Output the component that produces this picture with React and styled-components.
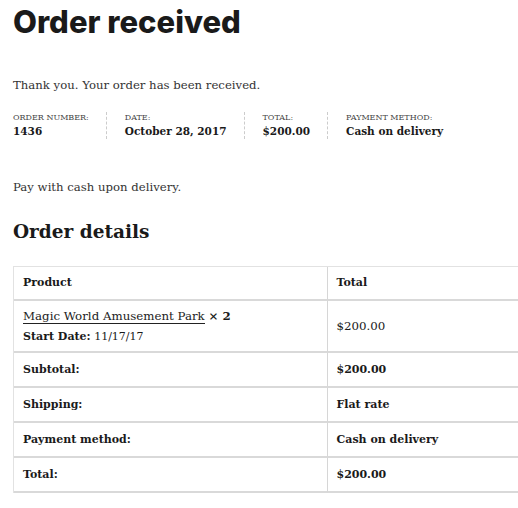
import React from "react";
import styled, { createGlobalStyle } from "styled-components";

const GlobalStyle = createGlobalStyle`
  html, body {
    margin: 0;
    padding: 0;
    background: #fff;
    overflow: hidden;
  }
  body {
    font-family: "DejaVu Serif", "Liberation Serif", serif;
    color: #1a1a1a;
  }
`;

const Page = styled.div`
  padding: 0 0 0 13px;
  width: 640px;
`;

const Title = styled.h1`
  margin: 0;
  padding-top: 2px;
  font-family: Inter, "Liberation Sans", sans-serif;
  font-weight: 800;
  font-size: 31px;
  line-height: 40px;
  color: #1a1a1a;
`;

const Text = styled.p`
  margin: ${(p) => p.$mt || 0}px 0 0;
  font-size: 11.7px;
  line-height: 20px;
  color: #333;
`;

const Overview = styled.ul`
  list-style: none;
  margin: 17px 0 0;
  padding: 0;
  display: flex;
`;

const OverviewItem = styled.li`
  padding-right: 17px;
  margin-right: 18px;
  border-right: 1px dashed #ccc;
  display: flex;
  flex-direction: column;

  &:last-child {
    border-right: none;
  }
`;

const Label = styled.span`
  font-size: 8px;
  line-height: 12px;
  text-transform: uppercase;
  color: #444;
`;

const Value = styled.strong`
  font-size: 10.5px;
  line-height: 15px;
  font-weight: 700;
`;

const Heading = styled.h2`
  margin: 20px 0 0;
  font-size: 18.5px;
  line-height: 30px;
  font-weight: 700;
`;

const Table = styled.table`
  margin-top: 19px;
  width: 628px;
  border-collapse: separate;
  border-spacing: 0;
  border-left: 1px solid #e2e2e2;
  border-top: 1px solid #e2e2e2;
  font-size: 11px;
`;

const Cell = styled.td`
  padding: 0 8px 0 9px;
  height: ${(p) => p.$h || 33}px;
  text-align: left;
  vertical-align: middle;
  font-size: ${(p) => (p.$large ? 11.8 : 11)}px;
  font-weight: ${(p) => (p.$bold ? 700 : 400)};
  line-height: 20px;
  border-bottom: 2px solid #d9d9d9;
  border-right: 1px solid #d6d6d6;
  color: #1a1a1a;
  width: 50%;
`;

const ProductLink = styled.a`
  color: #222;
  text-decoration: none;
  border-bottom: 1px solid #222;
`;

const Meta = styled.div`
  margin-top: 1px;
  font-size: 11px;
`;

const rows = [
  ["Subtotal:", "$200.00"],
  ["Shipping:", "Flat rate"],
  ["Payment method:", "Cash on delivery"],
  ["Total:", "$200.00"],
];

export default function App() {
  return (
    <Page>
      <GlobalStyle />
      <Title>Order received</Title>
      <Text $mt={33}>Thank you. Your order has been received.</Text>

      <Overview>
        <OverviewItem>
          <Label>Order number:</Label>
          <Value>1436</Value>
        </OverviewItem>
        <OverviewItem>
          <Label>Date:</Label>
          <Value>October 28, 2017</Value>
        </OverviewItem>
        <OverviewItem>
          <Label>Total:</Label>
          <Value>$200.00</Value>
        </OverviewItem>
        <OverviewItem>
          <Label>Payment method:</Label>
          <Value>Cash on delivery</Value>
        </OverviewItem>
      </Overview>

      <Text $mt={38}>Pay with cash upon delivery.</Text>
      <Heading>Order details</Heading>

      <Table>
        <thead>
          <tr>
            <Cell as="th" $bold $h={32}>Product</Cell>
            <Cell as="th" $bold $h={32}>Total</Cell>
          </tr>
        </thead>
        <tbody>
          <tr>
            <Cell $h={50} $large>
              <ProductLink href="#">Magic World Amusement Park</ProductLink>{" "}
              <strong>× 2</strong>
              <Meta>
                <strong>Start Date:</strong> 11/17/17
              </Meta>
            </Cell>
            <Cell $h={50} $large>$200.00</Cell>
          </tr>
        </tbody>
        <tfoot>
          {rows.map(([label, value]) => (
            <tr key={label}>
              <Cell as="th" $bold>{label}</Cell>
              <Cell $bold>{value}</Cell>
            </tr>
          ))}
        </tfoot>
      </Table>
    </Page>
  );
}
